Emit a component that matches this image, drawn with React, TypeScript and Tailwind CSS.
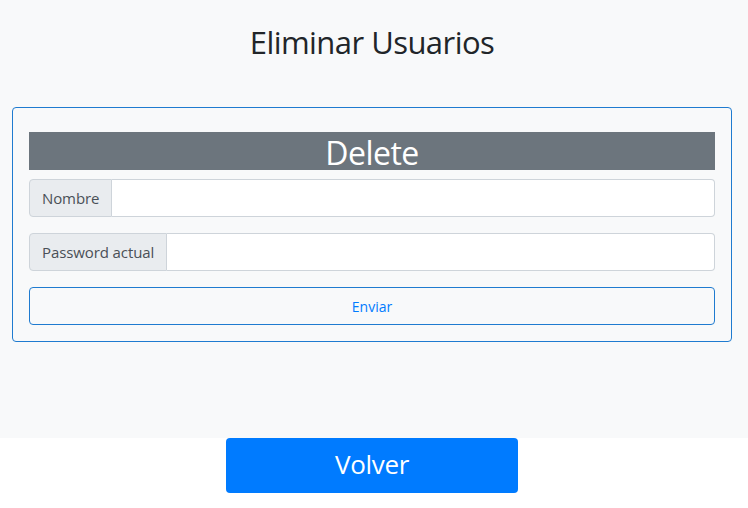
export default function App() {
  return (
    <div className="w-[748px] h-[508px] bg-white font-['Open_Sans',sans-serif] text-[#212529]">
      <div className="h-[438px] bg-[#f8f9fa]">
        <div className="w-[744px] pt-[18px] px-[12px]">
          <h2 className="text-center text-[31px] leading-[48px] tracking-[-0.55px]">Eliminar Usuarios</h2>
          <div className="mt-[41px] border border-[#1f7bd0] rounded-[4px] px-[16px] pt-[24px] pb-[16px]">
            <div className="h-[38px] bg-[#6c757d] text-white text-center text-[32px] leading-[42px] tracking-[-0.5px]">Delete</div>
            <div className="mt-[9px] flex h-[38px]">
              <span className="flex items-center px-[12px] bg-[#e9ecef] border border-[#ced4da] rounded-l-[4px] text-[15px] tracking-[-0.1px] text-[#495057]">Nombre</span>
              <input className="flex-1 bg-white border border-l-0 border-[#ced4da] rounded-r-[4px] outline-none" />
            </div>
            <div className="mt-[16px] flex h-[38px]">
              <span className="flex items-center px-[12px] bg-[#e9ecef] border border-[#ced4da] rounded-l-[4px] text-[15px] tracking-[-0.1px] text-[#495057]">Password actual</span>
              <input className="flex-1 bg-white border border-l-0 border-[#ced4da] rounded-r-[4px] outline-none" />
            </div>
            <button className="mt-[16px] w-full h-[38px] border border-[#1f7bd0] rounded-[4px] text-[#007bff] text-[14px]">Enviar</button>
          </div>
        </div>
      </div>
      <div className="w-[744px] flex justify-center">
        <button className="w-[292px] h-[55px] bg-[#007bff] rounded-[4px] text-white text-[26px] leading-[48px] pb-[4px] tracking-[-0.3px]">Volver</button>
      </div>
    </div>
  );
}
